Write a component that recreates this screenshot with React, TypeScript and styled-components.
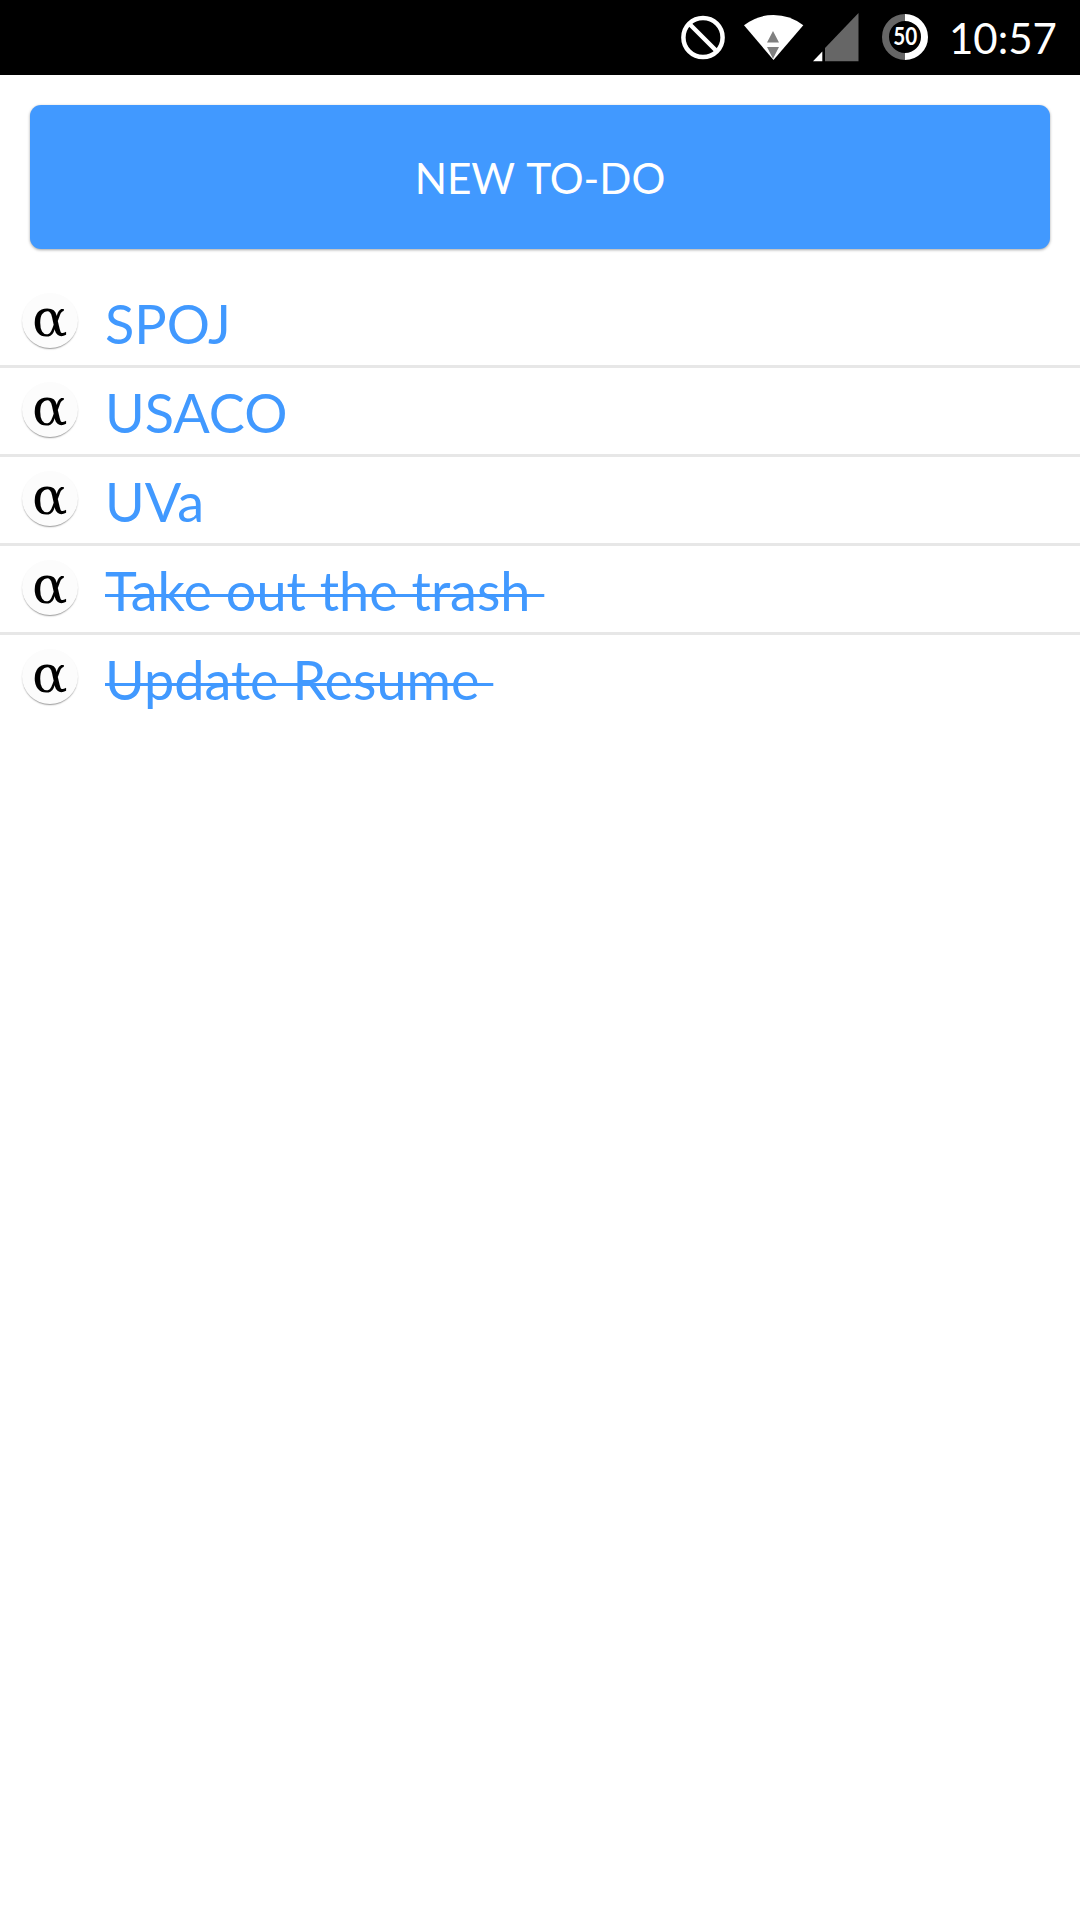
import React from 'react';
import styled, { createGlobalStyle } from 'styled-components';

const GlobalStyle = createGlobalStyle`
  * { box-sizing: border-box; }
  body { margin: 0; background: #fff; font-family: Lato, "Noto Sans", sans-serif; }
`;

const Screen = styled.div`
  width: 1080px;
  height: 1920px;
  display: flex;
  flex-direction: column;
  background: #fff;
  overflow: hidden;
`;

const StatusBar = styled.header`
  height: 75px;
  display: flex;
  align-items: center;
  justify-content: flex-end;
  padding-right: 24px;
  background: #000;
  color: #fff;
`;

const StatusIcon = styled.svg<{ $w: number; $gap: number }>`
  width: ${p => p.$w}px;
  height: 75px;
  margin-right: ${p => p.$gap}px;
  flex: none;
`;

const BatteryLevel = styled.text`
  font: 700 25px Lato, sans-serif;
  fill: #fff;
  text-anchor: middle;
`;

const Clock = styled.time`
  width: 107px;
  height: 75px;
  padding-top: 1px;
  font-size: 42px;
  line-height: 75px;
`;

const Actions = styled.div`
  padding: 30px;
`;

const NewButton = styled.button`
  display: block;
  width: 100%;
  height: 144px;
  padding: 2px 0 0;
  border: 0;
  border-radius: 11px;
  background: #4199ff;
  color: #fff;
  font: 400 42.3px/142px Lato, sans-serif;
  word-spacing: 2px;
  text-align: center;
  box-shadow: 0 1px 3px rgba(0, 0, 0, 0.36);
`;

const List = styled.ul`
  margin: 0;
  padding: 0;
  list-style: none;
`;

const Row = styled.li`
  display: flex;
  align-items: flex-start;
  height: 89px;
  padding-left: 22px;
  border-bottom: 3px solid #e7e7e7;
  &:last-child { border-bottom: 0; }
`;

const Badge = styled.span`
  display: flex;
  justify-content: center;
  width: 56px;
  height: 55px;
  margin: 14px 27px 0 0;
  padding-left: 1px;
  border-radius: 50%;
  background: #fcfcfc;
  box-shadow: 0 1.5px 1.5px -0.5px rgba(0, 0, 0, 0.42);
`;

const Alpha = styled.span`
  font: 52.5px/56px "DejaVu Math TeX Gyre", "DejaVu Serif", serif;
  color: #000;
`;

const Label = styled.span<{ $done: boolean }>`
  padding-top: 2px;
  font-size: 54px;
  line-height: 86px;
  white-space: pre;
  color: #4199ff;
  text-decoration: ${p => (p.$done ? 'underline' : 'none')};
  text-decoration-thickness: 3px;
  text-decoration-skip-ink: none;
  text-underline-offset: -17px;
`;

const todos = [
  { text: 'SPOJ', done: false },
  { text: 'USACO', done: false },
  { text: 'UVa', done: false },
  { text: 'Take out the trash ', done: true },
  { text: 'Update Resume ', done: true },
];

export default function App() {
  return (
    <Screen>
      <GlobalStyle />
      <StatusBar>
        <StatusIcon $w={44} $gap={19} viewBox="681 0 44 75">
          <circle cx="703" cy="37.5" r="19.6" fill="none" stroke="#fff" strokeWidth="4.5" />
          <path d="M689.5 24 L716.5 51" stroke="#fff" strokeWidth="4.5" />
        </StatusIcon>
        <StatusIcon $w={60} $gap={9} viewBox="744 0 60 75">
          <path d="M744 25.3 Q757 15 773.5 15 T803.3 25.3 L773.5 60 Z" fill="#fff" />
          <path d="M773 31 L779 42.5 H767 Z M767 47 H779 L773 58.7 Z" fill="#808080" />
        </StatusIcon>
        <StatusIcon $w={46} $gap={23} viewBox="813 0 46 75">
          <path d="M825 48 L858.5 13 V61.3 H825 Z" fill="#666" />
          <path d="M813 61.3 L822.3 51.6 V61.3 Z" fill="#fff" />
        </StatusIcon>
        <StatusIcon $w={46} $gap={21} viewBox="882 0 46 75">
          <path d="M905 17.4 A19.5 19.5 0 0 0 905 56.4" fill="none" stroke="#666" strokeWidth="7" />
          <path d="M905 17.4 A19.5 19.5 0 0 1 905 56.4" fill="none" stroke="#fff" strokeWidth="7" />
          <BatteryLevel x="905.3" y="45" textLength="24" lengthAdjust="spacingAndGlyphs">50</BatteryLevel>
        </StatusIcon>
        <Clock>10:57</Clock>
      </StatusBar>
      <Actions>
        <NewButton>NEW TO-DO</NewButton>
      </Actions>
      <List>
        {todos.map(t => (
          <Row key={t.text}>
            <Badge><Alpha>α</Alpha></Badge>
            <Label $done={t.done}>{t.text}</Label>
          </Row>
        ))}
      </List>
    </Screen>
  );
}
